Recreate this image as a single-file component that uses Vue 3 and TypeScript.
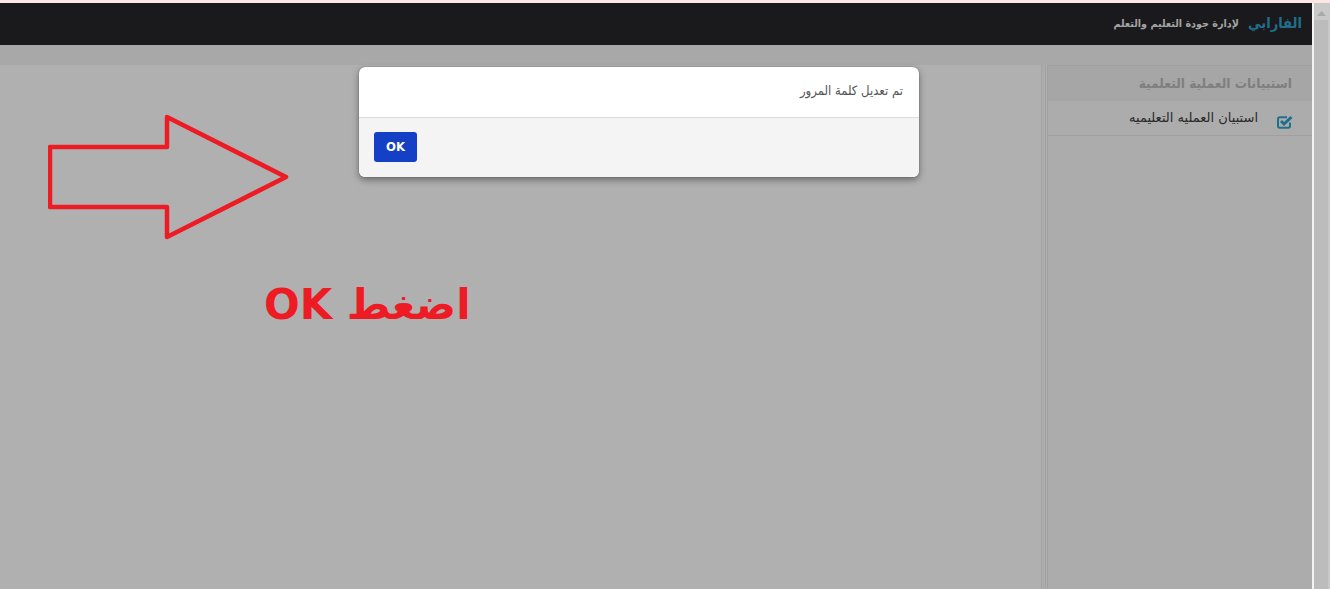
<script setup lang="ts">
const title = 'الفارابي'
const subtitle = 'لإدارة جودة التعليم والتعلم'
const sideTitle = 'استبيانات العملية التعلمية'
const sideItem = 'استبيان العمليه التعليميه'
const message = 'تم تعديل كلمة المرور'
</script>

<template>
  <div class="page">
    <div class="strip"></div>
    <div class="frame">
      <div class="main">
        <header class="topbar" dir="rtl">
          <span class="brand">{{ title }}</span>
          <span class="sub">{{ subtitle }}</span>
        </header>
        <div class="subbar"></div>
        <div class="content">
          <div class="pane"></div>
          <div class="gutter"></div>
          <aside class="side" dir="rtl">
            <div class="side-title">{{ sideTitle }}</div>
            <div class="side-item">
              <svg class="check" width="16" height="14" viewBox="0 0 16 14">
                <path d="M13 7.500V11a1.800 1.800 0 0 1-1.800 1.800H2.800A1.800 1.800 0 0 1 1 11V4A1.800 1.800 0 0 1 2.800 2.200H10" fill="none" stroke="#1f6f8c" stroke-width="2"/>
                <path d="M4 6l3 3 7.500-7" fill="none" stroke="#1f6f8c" stroke-width="3"/>
              </svg>
              <span>{{ sideItem }}</span>
            </div>
          </aside>
        </div>
      </div>
      <div class="scrollbar">
        <svg class="up" width="9" height="5" viewBox="0 0 9 5"><path d="M4.500 0L9 5H0z" fill="#a9a9a9"/></svg>
        <div class="thumb"></div>
      </div>
    </div>

    <svg class="arrow" width="250" height="130" viewBox="0 0 250 130">
      <path d="M2 33H119V3L238 63 119 123V93H2z" fill="none" stroke="#ed1c24" stroke-width="4.500" stroke-linejoin="round"/>
    </svg>
    <div class="note" dir="rtl">اضغط OK</div>

    <div class="dialog">
      <div class="dialog-body" dir="rtl">{{ message }}</div>
      <div class="dialog-foot"><button class="ok" type="button">OK</button></div>
    </div>
  </div>
</template>

<style>
html, body { margin: 0; padding: 0; overflow: hidden; }
</style>

<style scoped>
.page {
  position: relative;
  width: 1330px;
  height: 589px;
  overflow: hidden;
  display: flex;
  flex-direction: column;
  font-family: "DejaVu Sans Condensed", "DejaVu Sans", sans-serif;
  background: #b0b0b0;
}
.strip { height: 3px; background: #fbe8e4; flex: none; }
.frame { flex: 1; display: flex; min-height: 0; }
.main { flex: 1; display: flex; flex-direction: column; min-width: 0; }
.topbar {
  height: 42px;
  flex: none;
  background: #1a1a1d;
  display: flex;
  align-items: center;
  gap: 9px;
  padding: 0 10px 0 0;
  box-sizing: border-box;
}
.brand { color: #1f6f8c; font-size: 14.600px; font-weight: 700; margin-top: -4px; }
.sub { color: #a3a3a3; font-size: 10.700px; font-weight: 700; margin-top: -2px; }
.subbar { height: 20px; flex: none; background: #a8a8a8; }
.content { flex: 1; display: flex; min-height: 0; }
.pane { flex: 1; background: #b0b0b0; }
.gutter {
  width: 5px;
  flex: none;
  background: #acacac;
  border-left: 1px solid #a2a2a2;
  border-right: 1px solid #a2a2a2;
  box-sizing: border-box;
  margin-right: 1px;
}
.side { width: 265px; flex: none; background: #acacac; border-top: 1px solid #a0a0a0; border-left: 1px solid #a0a0a0; box-sizing: border-box; }
.side-title {
  height: 35px;
  background: #a6a6a6;
  color: #7f7f7f;
  font-size: 13.600px;
  font-weight: 700;
  display: flex;
  align-items: center;
  padding: 0 20px 2px 0;
  box-sizing: border-box;
}
.side-item {
  height: 35px;
  box-sizing: border-box;
  border-bottom: 1px solid #9f9f9f;
  display: flex;
  align-items: center;
  color: #2a2a2a;
  font-size: 13px;
  font-family: "DejaVu Sans", sans-serif;
  padding-right: 19px;
  gap: 19px;
}
.check { flex: none; margin-top: 7px; }
.side-item span { margin-top: -1px; }
.scrollbar {
  width: 18px;
  flex: none;
  background: #c9c9c9;
  border-left: 2px solid #f4f4f4;
  box-sizing: border-box;
  position: relative;
  display: flex;
  flex-direction: column;
  align-items: center;
  padding-right: 2px;
}
.up { margin-top: 8px; flex: none; }
.thumb { margin-top: 4px; width: 14px; flex: 1; background: #bcbcbc; }
.arrow { position: absolute; left: 48px; top: 114px; }
.note {
  position: absolute;
  left: 264px;
  top: 277px;
  color: #ed1c24;
  font-family: "DejaVu Sans", sans-serif;
  font-size: 42px;
  font-weight: 700;
  line-height: 56px;
  white-space: nowrap;
}
.dialog {
  position: absolute;
  left: 359px;
  top: 67px;
  width: 560px;
  height: 110px;
  background: #fff;
  border-radius: 6px;
  overflow: hidden;
  box-shadow: 0 0 1px #333, 0 3px 7px rgba(0, 0, 0, .4);
  display: flex;
  flex-direction: column;
}
.dialog-body {
  height: 51px;
  box-sizing: border-box;
  flex: none;
  padding: 16px 16px 0;
  color: #555;
  font-size: 13px;
  line-height: 16px;
  border-bottom: 1px solid #dcdcdc;
}
.dialog-foot { flex: 1; background: #f4f4f5; padding: 14px 15px; }
.ok {
  display: block;
  width: 43px;
  height: 30px;
  padding: 0 0 2px;
  border: 0;
  border-radius: 3px;
  background: #1340c4;
  color: #fff;
  font-family: "DejaVu Sans Condensed", "DejaVu Sans", sans-serif;
  font-size: 13px;
  font-weight: 700;
}
</style>
